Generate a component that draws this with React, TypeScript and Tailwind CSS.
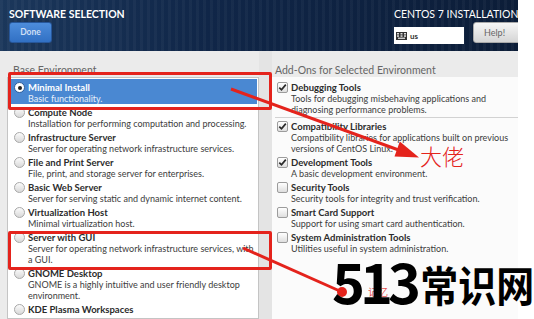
import React from "react";

const F = { fontFamily: "Lato, 'Noto Sans', sans-serif" };

function Radio({ on }: { on?: boolean }) {
  return on ? (
    <div className="w-[11px] h-[11px] shrink-0 rounded-full bg-white border border-[#2d5e9c] flex items-center justify-center">
      <div className="w-[4px] h-[4px] rounded-full bg-[#222]" />
    </div>
  ) : (
    <div className="w-[11px] h-[11px] shrink-0 rounded-full border border-[#a8a8a8] bg-[linear-gradient(180deg,#fbfbfb,#d9d9d9)]" />
  );
}

function Check({ on }: { on?: boolean }) {
  return (
    <div className="w-[11px] h-[11px] shrink-0 rounded-[2px] border border-[#9c9c9c] bg-[linear-gradient(180deg,#ffffff,#dedede)] flex items-center justify-center">
      {on && (
        <svg width="9" height="9" viewBox="0 0 9 9">
          <path d="M1.3 4.6 L3.5 6.8 L7.8 1.6" fill="none" stroke="#2a2a2a" strokeWidth="1.7" />
        </svg>
      )}
    </div>
  );
}

const envs: { t: string; d: string[]; on?: boolean }[] = [
  { t: "Minimal Install", d: ["Basic functionality."], on: true },
  { t: "Compute Node", d: ["Installation for performing computation and processing."] },
  { t: "Infrastructure Server", d: ["Server for operating network infrastructure services."] },
  { t: "File and Print Server", d: ["File, print, and storage server for enterprises."] },
  { t: "Basic Web Server", d: ["Server for serving static and dynamic internet content."] },
  { t: "Virtualization Host", d: ["Minimal virtualization host."] },
  { t: "Server with GUI", d: ["Server for operating network infrastructure services, with", "a GUI."] },
  { t: "GNOME Desktop", d: ["GNOME is a highly intuitive and user friendly desktop", "environment."] },
  { t: "KDE Plasma Workspaces", d: [] },
];

const addons: { t: string; d: string[]; on?: boolean; sep?: boolean }[] = [
  { t: "Debugging Tools", d: ["Tools for debugging misbehaving applications and", "diagnosing performance problems."], on: true, sep: true },
  { t: "Compatibility Libraries", d: ["Compatibility libraries for applications built on previous", "versions of CentOS Linux."], on: true },
  { t: "Development Tools", d: ["A basic development environment."], on: true },
  { t: "Security Tools", d: ["Security tools for integrity and trust verification."] },
  { t: "Smart Card Support", d: ["Support for using smart card authentication."] },
  { t: "System Administration Tools", d: ["Utilities useful in system administration."] },
];

export default function App() {
  return (
    <div className="relative w-[534px] h-[319px] bg-white overflow-hidden" style={F}>
      <div className="w-[518px] h-full flex flex-col">
        {/* header */}
        <div className="h-[51px] shrink-0 flex px-[9px] overflow-hidden bg-[repeating-linear-gradient(90deg,rgba(255,255,255,0.035)_0px,rgba(255,255,255,0.035)_3px,transparent_3px,transparent_7px),linear-gradient(90deg,#1b375b,#102648_40%,#0c1d38)]">
          <div className="flex-1 flex flex-col pt-[8px]">
            <div className="text-[10.5px] leading-[12px] font-bold text-white">SOFTWARE SELECTION</div>
            <div className="mt-[2px] w-[43px] h-[21px] rounded-[3px] border border-[#27579a] bg-[linear-gradient(180deg,#4d8ddb,#3170c4)] flex items-center justify-center text-[8.5px] font-bold text-[#cfdff4]">
              Done
            </div>
          </div>
          <div className="w-[115px] shrink-0 flex flex-col pt-[8px]">
            <div className="text-[10.5px] leading-[12px] text-white whitespace-nowrap">CENTOS 7 INSTALLATION</div>
            <div className="flex items-start mt-[2px] gap-[9px]">
              <div className="mt-[5px] w-[70px] h-[17px] shrink-0 bg-white flex items-center pl-[2px] gap-[3px]">
                <svg width="11" height="8" viewBox="0 0 11 8">
                  <rect x="0" y="0" width="11" height="8" fill="#333" />
                  <g fill="#ddd">
                    <rect x="1" y="1" width="2" height="1.5" />
                    <rect x="4.5" y="1" width="2" height="1.5" />
                    <rect x="8" y="1" width="2" height="1.5" />
                    <rect x="1" y="3.3" width="2" height="1.5" />
                    <rect x="4.5" y="3.3" width="2" height="1.5" />
                    <rect x="8" y="3.3" width="2" height="1.5" />
                    <rect x="2" y="5.6" width="7" height="1.3" />
                  </g>
                </svg>
                <span className="text-[8px] font-bold text-[#333] leading-none">us</span>
              </div>
              <div className="w-[50px] h-[21px] shrink-0 rounded-[3px] border border-[#a9a9a9] bg-[linear-gradient(180deg,#f6f6f6,#d5d5d5)] flex items-center pl-[10px] text-[9px] text-[#666]">
                Help!
              </div>
            </div>
          </div>
        </div>

        {/* body */}
        <div className="flex-1 flex bg-[#ebebeb] pl-[7px] min-h-0">
          <div className="w-[252px] shrink-0 flex flex-col pt-[13px]">
            <div className="pl-[6px] text-[10.5px] leading-[12px] text-[#666] mb-[1px]">Base Environment</div>
            <div className="flex-1 bg-white border border-[#c4c4c4] pt-[1px] px-[1px] overflow-hidden">
              {envs.map((e) => (
                <div
                  key={e.t}
                  className={`flex items-start gap-[3px] pl-[5px] pt-[3px] ${e.on ? "bg-[#4a88d2]" : ""}`}
                >
                  <Radio on={e.on} />
                  <div className="flex flex-col">
                    <div className={`text-[9.5px] leading-[11px] font-bold whitespace-nowrap ${e.on ? "text-white" : "text-[#2b2b2b]"}`}>{e.t}</div>
                    {e.d.map((l) => (
                      <div key={l} className={`text-[9px] leading-[11px] whitespace-nowrap ${e.on ? "text-[#e8f0fa]" : "text-[#3c3c3c]"}`}>{l}</div>
                    ))}
                  </div>
                </div>
              ))}
            </div>
          </div>
          <div className="w-[13px] shrink-0 bg-[#e4e4e4]" />
          <div className="flex-1 flex flex-col pt-[13px]">
            <div className="pl-[3px] text-[10.5px] leading-[12px] text-[#666] mb-[1px] whitespace-nowrap">Add-Ons for Selected Environment</div>
            <div className="flex-1 bg-[#fbfbfb] pt-[2px]">
              {addons.map((a) => (
                <div key={a.t}>
                  <div className="flex items-start gap-[3px] pl-[5px] pt-[3px]">
                    <Check on={a.on} />
                    <div className="flex flex-col">
                      <div className="text-[9.5px] leading-[11px] font-bold text-[#2b2b2b] whitespace-nowrap">{a.t}</div>
                      {a.d.map((l) => (
                        <div key={l} className="text-[9px] leading-[11px] text-[#3c3c3c] whitespace-nowrap">{l}</div>
                      ))}
                    </div>
                  </div>
                  {a.sep && <div className="mt-[2px] ml-[3px] h-px bg-[#d2d2d2]" />}
                </div>
              ))}
            </div>
          </div>
        </div>
      </div>

      {/* annotations */}
      <div className="absolute left-[8px] top-[72px] w-[264px] h-[38px] border-[3px] border-[#e4231c] rounded-[2px]" />
      <div className="absolute left-[8px] top-[231px] w-[264px] h-[39px] border-[3px] border-[#e4231c] rounded-[2px]" />
      <svg className="absolute left-0 top-0" width="534" height="319" viewBox="0 0 534 319">
        <line x1="231" y1="89" x2="400" y2="150.5" stroke="#e4231c" strokeWidth="3" />
        <polygon points="419,157.5 394.5,156.5 399.8,141.5" fill="#e4231c" />
        <line x1="243" y1="248" x2="342" y2="292" stroke="#e4231c" strokeWidth="3" />
        <circle cx="342" cy="292" r="5" fill="#e4231c" />
      </svg>
      <div
        className="absolute left-[420px] top-[142px] text-[22px] leading-[26px] font-light text-[#e4231c]"
        style={{ fontFamily: "'Noto Sans CJK SC', sans-serif" }}
      >
        大佬
      </div>
      <div
        className="absolute left-[368px] top-[286px] text-[10px] leading-[12px] text-[#e4231c] opacity-80"
        style={{ fontFamily: "'Noto Sans CJK SC', sans-serif" }}
      >
        记忆
      </div>
      <div
        className="absolute left-[332px] top-[248px] flex items-baseline text-black font-bold whitespace-nowrap"
        style={{ fontFamily: "'Noto Sans CJK SC', sans-serif" }}
      >
        <span className="text-[56px] leading-[64px] tracking-[-5px]">513</span>
        <span className="inline-block text-[38px] leading-[64px] ml-[4px] scale-y-[1.12] origin-bottom">常识网</span>
      </div>
    </div>
  );
}
